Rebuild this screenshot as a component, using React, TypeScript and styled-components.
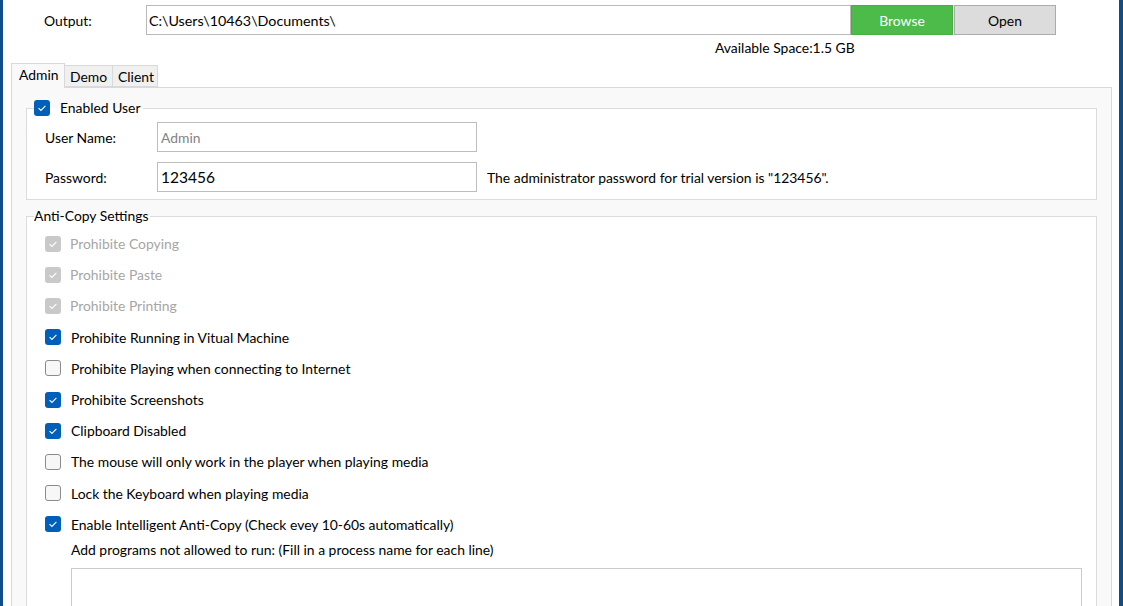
import styled, { createGlobalStyle } from "styled-components"

const GlobalStyle = createGlobalStyle`
  html, body {
    margin: 0;
    padding: 0;
    background: #fff;
  }
  body {
    font-family: Lato, "Noto Sans", sans-serif;
    font-size: 13.9px;
    color: #000;
  }
`

const Window = styled.div`
  box-sizing: border-box;
  width: 1123px;
  height: 606px;
  overflow: hidden;
  background: #fff;
  border-left: 3px solid #0f4c8a;
  border-right: 4px solid #0f4c8a;
`

const HeaderRow = styled.div`
  display: flex;
  align-items: center;
  height: 30px;
  margin-top: 5px;
  padding-left: 41px;
`

const OutputLabel = styled.div`
  width: 102px;
`

const PathInput = styled.div`
  box-sizing: border-box;
  width: 705px;
  height: 30px;
  border: 1px solid #b9b9b9;
  padding: 0 2px;
  display: flex;
  align-items: center;
  font-size: 14.3px;
  background: #fff;
`

const Button = styled.div<{ $primary?: boolean }>`
  box-sizing: border-box;
  height: 30px;
  width: 102px;
  margin-left: ${(p) => (p.$primary ? "0" : "1px")};
  display: flex;
  align-items: center;
  justify-content: center;
  background: ${(p) => (p.$primary ? "#4cbb4a" : "#dcdcdc")};
  color: ${(p) => (p.$primary ? "#fff" : "#000")};
  border: 1px solid ${(p) => (p.$primary ? "#45b043" : "#acacac")};
`

const SpaceRow = styled.div`
  margin-top: 5px;
  padding-left: 712px;
  line-height: 16px;
`

const TabBar = styled.div`
  display: flex;
  align-items: flex-end;
  margin-top: 7px;
  padding-left: 8px;
  position: relative;
  z-index: 1;
`

const Tab = styled.div<{ $active?: boolean; $width: number }>`
  box-sizing: border-box;
  width: ${(p) => p.$width}px;
  height: ${(p) => (p.$active ? "25px" : "22px")};
  margin-bottom: ${(p) => (p.$active ? "-1px" : "0")};
  margin-left: -1px;
  padding: 3px 0 0 ${(p) => (p.$active ? "7px" : "5px")};
  line-height: 16px;
  white-space: nowrap;
  border: 1px solid #d9d9d9;
  border-bottom: ${(p) => (p.$active ? "none" : "1px solid #d9d9d9")};
  background: ${(p) => (p.$active ? "#f9f9f9" : "#f0f0f0")};
  &:first-child {
    margin-left: 0;
  }
`

const TabPanel = styled.div`
  box-sizing: border-box;
  margin-left: 8px;
  width: 1101px;
  height: 540px;
  border: 1px solid #d9d9d9;
  background: #f9f9f9;
  padding: 0 14px;
  display: flex;
  flex-direction: column;
`

const Group = styled.fieldset<{ $top: number }>`
  margin: ${(p) => p.$top}px 0 0;
  padding: 0;
  min-width: 0;
  border: 1px solid #dcdcdc;
  background: #fff;
`

const Legend = styled.legend`
  display: flex;
  align-items: center;
  gap: 10px;
  margin-left: 7px;
  padding: 0 2px 0 0;
  line-height: 16px;
  height: 16px;
`

const Box = styled.span<{ $checked?: boolean; $disabled?: boolean }>`
  box-sizing: border-box;
  width: 16px;
  height: 16px;
  flex: none;
  border-radius: 3px;
  display: inline-flex;
  align-items: center;
  justify-content: center;
  background: ${(p) =>
    p.$checked ? (p.$disabled ? "#c9c9c9" : "#005fb8") : "#f7f7f7"};
  border: ${(p) => (p.$checked ? "none" : "1px solid #8b8b8b")};
`

const UserFields = styled.div`
  display: flex;
  flex-direction: column;
  gap: 10px;
  padding: 6px 18px 7px;
`

const FieldRow = styled.div`
  display: flex;
  align-items: center;
`

const FieldLabel = styled.div`
  width: 112px;
`

const TextField = styled.div<{ $muted?: boolean }>`
  box-sizing: border-box;
  width: 320px;
  height: 30px;
  border: 1px solid #bdbdbd;
  padding: 0 3px;
  display: flex;
  align-items: center;
  background: #fff;
  color: ${(p) => (p.$muted ? "#838383" : "#000")};
  font-size: ${(p) => (p.$muted ? "13.9px" : "15.5px")};
`

const Hint = styled.div`
  margin-left: 10px;
`

const OptionList = styled.div`
  display: flex;
  flex-direction: column;
  padding: 4px 18px 0;
`

const OptionRow = styled.div<{ $disabled?: boolean }>`
  display: flex;
  align-items: center;
  gap: ${(p) => (p.$disabled ? "9px" : "10px")};
  height: 31.2px;
  color: ${(p) => (p.$disabled ? "#a6a6a6" : "#000")};
`

const SubLabel = styled.div`
  padding-left: 26px;
  margin-top: 1px;
  line-height: 18px;
`

const ProcessBox = styled.div`
  box-sizing: border-box;
  margin: 9px 0 0 26px;
  width: 1011px;
  height: 120px;
  border: 1px solid #cbcbcb;
  background: #fff;
`

const Check = ({ checked, disabled }: { checked?: boolean; disabled?: boolean }) => (
  <Box $checked={checked} $disabled={disabled}>
    {checked && (
      <svg width="16" height="16" viewBox="0 0 16 16">
        <path d="M4.6 8.2 L6.9 10.4 L11.4 5.8" fill="none" stroke="#fff" strokeWidth="1.1" />
      </svg>
    )}
  </Box>
)

const options = [
  { label: "Prohibite Copying", checked: true, disabled: true },
  { label: "Prohibite Paste", checked: true, disabled: true },
  { label: "Prohibite Printing", checked: true, disabled: true },
  { label: "Prohibite Running in Vitual Machine", checked: true },
  { label: "Prohibite Playing when connecting to Internet", checked: false },
  { label: "Prohibite Screenshots", checked: true },
  { label: "Clipboard Disabled", checked: true },
  { label: "The mouse will only work in the player when playing media", checked: false },
  { label: "Lock the Keyboard when playing media", checked: false },
  { label: "Enable Intelligent Anti-Copy (Check evey 10-60s automatically)", checked: true },
]

export default function App() {
  return (
    <Window>
      <GlobalStyle />
      <HeaderRow>
        <OutputLabel>Output:</OutputLabel>
        <PathInput>C:\Users\10463\Documents\</PathInput>
        <Button $primary>Browse</Button>
        <Button>Open</Button>
      </HeaderRow>
      <SpaceRow>Available Space:1.5 GB</SpaceRow>

      <TabBar>
        <Tab $active $width={54}>Admin</Tab>
        <Tab $width={49}>Demo</Tab>
        <Tab $width={46}>Client</Tab>
      </TabBar>
      <TabPanel>
        <Group $top={12}>
          <Legend>
            <Check checked />
            Enabled User
          </Legend>
          <UserFields>
            <FieldRow>
              <FieldLabel>User Name:</FieldLabel>
              <TextField $muted>Admin</TextField>
            </FieldRow>
            <FieldRow>
              <FieldLabel>Password:</FieldLabel>
              <TextField>123456</TextField>
              <Hint>The administrator password for trial version is "123456".</Hint>
            </FieldRow>
          </UserFields>
        </Group>

        <Group $top={8}>
          <Legend>Anti-Copy Settings</Legend>
          <OptionList>
            {options.map((o) => (
              <OptionRow key={o.label} $disabled={o.disabled}>
                <Check checked={o.checked} disabled={o.disabled} />
                {o.label}
              </OptionRow>
            ))}
            <SubLabel>Add programs not allowed to run: (Fill in a process name for each line)</SubLabel>
            <ProcessBox />
          </OptionList>
        </Group>
      </TabPanel>
    </Window>
  )
}
